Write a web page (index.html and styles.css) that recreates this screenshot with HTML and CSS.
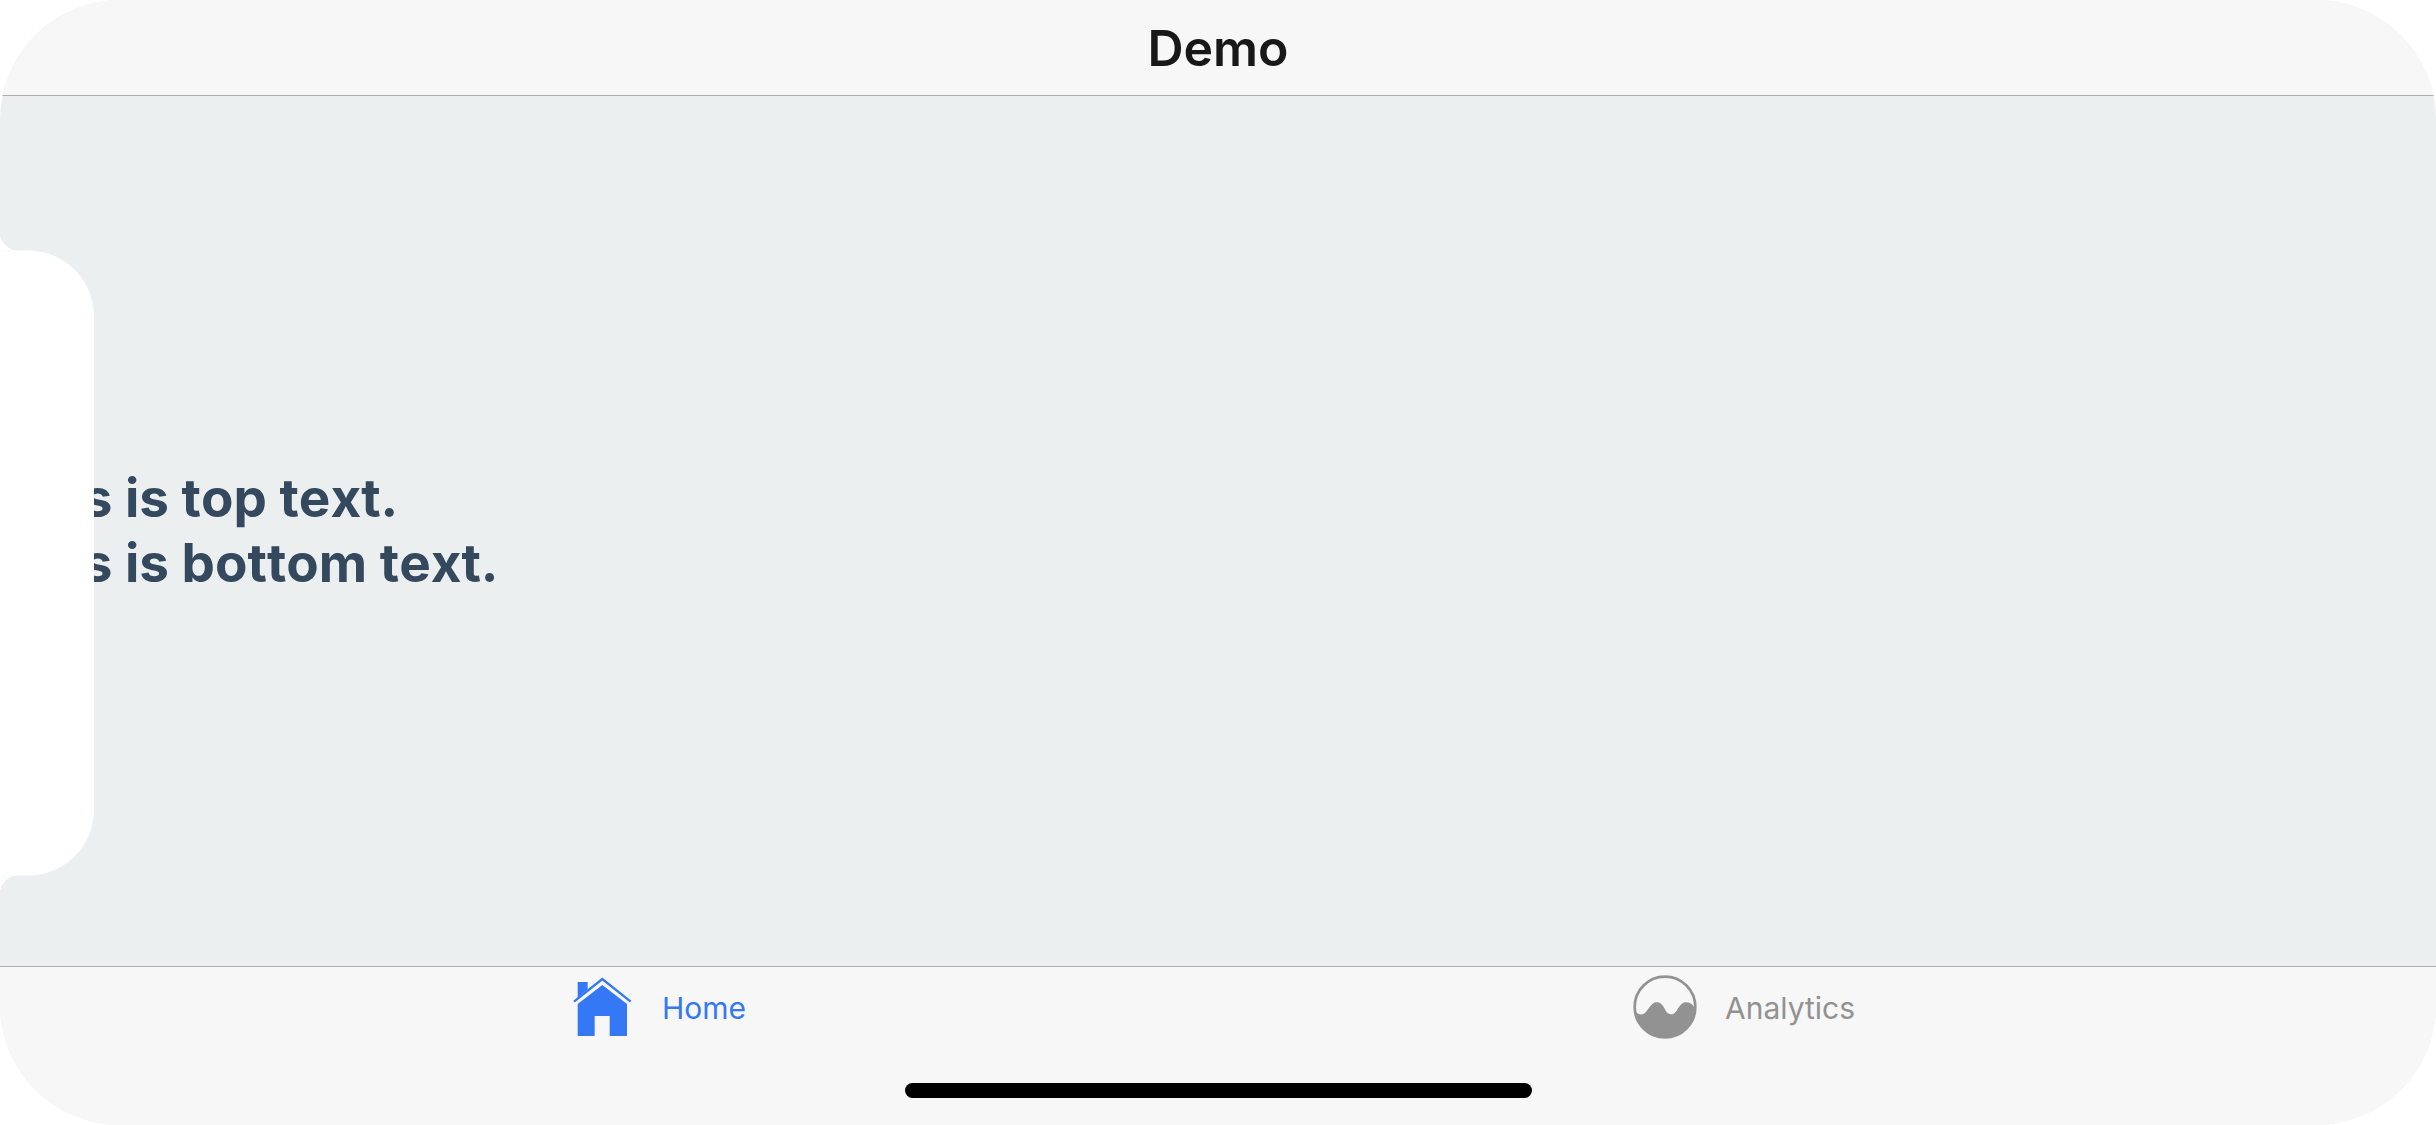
FILE: index.html
```html
<!DOCTYPE html>
<html lang="en">
<head>
<meta charset="utf-8">
<title>Demo</title>
<link rel="stylesheet" href="styles.css">
</head>
<body>
<div class="screen">
  <header class="navbar"><h1 class="navbar-title">Demo</h1></header>
  <main class="content">
    <p class="line">This is top text.</p>
    <p class="line">This is bottom text.</p>
  </main>
  <footer class="footer">
    <nav class="tabs">
      <a class="tab tab-active" href="#home">
        <svg class="tab-icon" viewBox="90 75 192 192" aria-hidden="true">
          <path fill="currentColor" d="M113 96h30v22l-30 25zM187 105l74 57v96h-52v-60h-45v60h-51v-96z"/>
          <path fill="none" stroke="currentColor" stroke-width="7" d="M102 155l85-68 85 68"/>
        </svg>
        <span class="tab-label">Home</span>
      </a>
      <a class="tab" href="#analytics">
        <svg class="tab-icon" viewBox="98 74 192 192" aria-hidden="true">
          <circle cx="194" cy="170" r="91" fill="none" stroke="currentColor" stroke-width="8"/>
          <path fill="currentColor" d="M101 176C112 197 130 197 139 182C153 163 158 156 169 156C181 156 187 164 195 179C204 196 219 196 229 181C240 163 246 156 258 156C272 156 279 166 286 176A93 93 0 0 1 101 176z"/>
        </svg>
        <span class="tab-label">Analytics</span>
      </a>
    </nav>
    <div class="home-indicator"></div>
  </footer>
  <div class="notch"></div>
</div>
</body>
</html>
```
FILE: styles.css
```css
* {
  box-sizing: border-box;
}

body {
  margin: 0;
  background: #fff;
  font-family: Inter, "Liberation Sans", sans-serif;
}

.screen {
  position: relative;
  display: flex;
  flex-direction: column;
  min-height: 100vh;
  overflow: hidden;
  border-radius: 120px;
  background: #ebeff0;
}

.navbar {
  display: flex;
  align-items: center;
  justify-content: center;
  height: 96px;
  border-bottom: 1px solid #acacac;
  background: #f7f7f7;
}

.navbar-title {
  margin: 0;
  font-size: 50px;
  line-height: 60px;
  font-weight: 600;
  color: #181818;
}

.content {
  display: flex;
  flex: 1;
  flex-direction: column;
  justify-content: center;
}

.line {
  margin: 0;
  font-size: 53px;
  line-height: 65px;
  font-weight: 700;
  font-kerning: none;
  color: #34495e;
}

.footer {
  display: flex;
  flex-direction: column;
  align-items: center;
  justify-content: space-between;
  height: 159px;
  padding: 8px 132px 27px;
  border-top: 1px solid #acacac;
  background: #f7f7f7;
}

.tabs {
  display: flex;
  align-self: stretch;
}

.tab {
  display: flex;
  flex: 1;
  align-items: center;
  justify-content: center;
  gap: 28px;
  padding-right: 34px;
  color: #929292;
  text-decoration: none;
}

.tab-active {
  color: #3478f6;
}

.tab-icon {
  width: 64px;
  height: 64px;
}

.tab-label {
  padding-top: 2px;
  font-size: 30px;
  line-height: 36px;
}

.home-indicator {
  width: 627px;
  height: 15px;
  border-radius: 8px;
  background: #000;
}

/* Camera housing, which covers the left edge in landscape */
.notch {
  position: absolute;
  top: 50%;
  left: 0;
  width: 94px;
  height: 625px;
  transform: translateY(-50%);
  border-radius: 0 66px 66px 0;
  background: #fff;
}

.notch::before,
.notch::after {
  content: "";
  position: absolute;
  left: 0;
  width: 18px;
  height: 18px;
}

.notch::before {
  bottom: 100%;
  background: radial-gradient(circle at 100% 0, transparent 18px, #fff 18px);
}

.notch::after {
  top: 100%;
  background: radial-gradient(circle at 100% 100%, transparent 18px, #fff 18px);
}
```
